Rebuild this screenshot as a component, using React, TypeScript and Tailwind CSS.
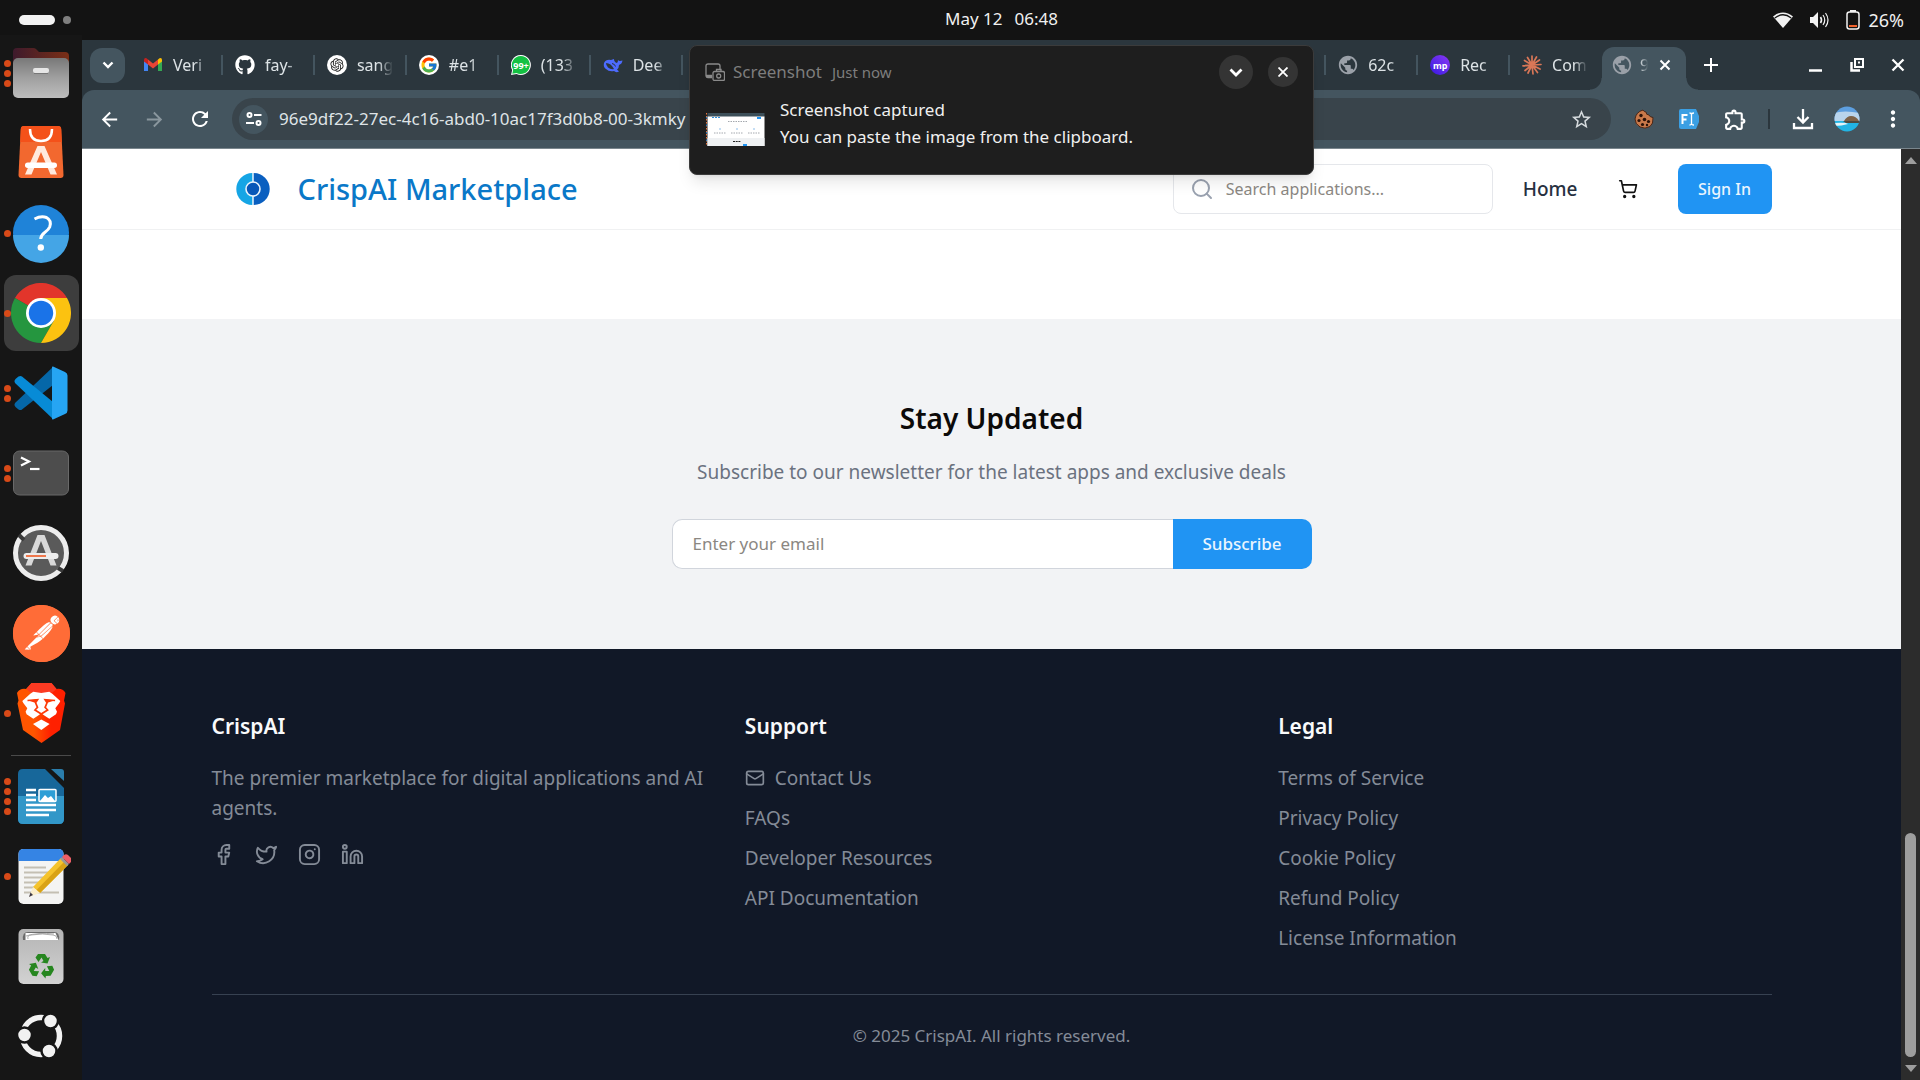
import type { ReactNode } from "react";
import { Facebook, Twitter, Instagram, Linkedin, Mail, Search, ShoppingCart } from "lucide-react";
import { FcGoogle } from "react-icons/fc";
import { FaGithub } from "react-icons/fa";
import { RiOpenaiFill } from "react-icons/ri";
import { SiPostman } from "react-icons/si";
import {
  MdArrowBack,
  MdArrowForward,
  MdMoreVert,
  MdOutlineExtension,
  MdPublic,
  MdRefresh,
  MdStarBorder,
} from "react-icons/md";

/* ---------- dock ---------- */

const FilesIcon = () => (
  <svg viewBox="0 0 60 60" className="size-[60px]">
    <defs>
      <linearGradient id="fl" x1="0" y1="0" x2="0" y2="1">
        <stop offset="0" stopColor="#787878" />
        <stop offset=".5" stopColor="#a0a0a0" />
        <stop offset="1" stopColor="#bdbdbd" />
      </linearGradient>
      <linearGradient id="fb" x1="0" y1="0" x2="1" y2="0">
        <stop offset="0" stopColor="#3e1a2c" />
        <stop offset="1" stopColor="#7a2f16" />
      </linearGradient>
    </defs>
    <path d="M2 22V9q0-4 4-4h16q2 0 3 1l3 3h26q4 0 4 4v12z" fill="url(#fb)" />
    <rect x="2" y="15" width="56" height="40" rx="5" fill="url(#fl)" />
    <rect x="22" y="25" width="16" height="5" rx="2" fill="#e6e6e6" />
    <path d="M23 30.500h14" stroke="#777" />
  </svg>
);

const StoreIcon = () => (
  <svg viewBox="0 0 60 60" className="size-[60px]">
    <path d="M13 3h34q3 0 3.200 3l2.300 46q0 3-3 3h-39q-3 0-3-3L9.800 6q.2-3 3.200-3z" fill="#f2682f" />
    <path d="M13 3h34q3 0 3.200 3l.6 13H9.200l.6-13q.2-3 3.200-3z" fill="#f4511a" />
    <path d="M19 6q0 12 11 12t11-12" fill="none" stroke="#fff" strokeWidth="2.500" />
    <path d="M14 51.500 26.500 23h7L46 51.500h-6.500L30 29l-9.500 22.500z" fill="#ffeade" />
    <rect x="14" y="39.500" width="32" height="5.500" rx="2.700" fill="#fff" />
  </svg>
);

const HelpIcon = () => (
  <svg viewBox="0 0 60 60" className="size-[60px]">
    <circle cx="30" cy="30" r="28" fill="#1f83d8" />
    <path d="M2 32a28 28 0 0 0 56 0z" fill="#44a5e6" />
    <path d="M23.500 16q6.500-3.500 12-1.500 5.500 3 3.200 9.500-1 2.500-5 5.500-4 3-4 6.500" fill="none" stroke="#fff" strokeWidth="3" />
    <circle cx="29.800" cy="44.500" r="3.200" fill="#fff" />
  </svg>
);

const ChromeIcon = () => (
  <svg viewBox="0 0 60 60" className="size-[60px]">
    <path d="M30 30 4 15A30 30 0 0 1 56 15z" fill="#e2352b" />
    <path d="M30 30 4 15a30 30 0 0 0 26 45l13-22.500z" fill="#25963f" />
    <path d="M30 15h26a30 30 0 0 1-26 45l13-22.500z" fill="#fcc210" />
    <circle cx="30" cy="30" r="15" fill="#fff" />
    <circle cx="30" cy="30" r="12.200" fill="#1a73e8" />
  </svg>
);

const CodeIcon = () => (
  <svg viewBox="0 0 60 60" className="size-[60px]">
    <path d="M4 40q-1.500 2 .5 4l3 2.500q2 1 3.500 0L42 22V4z" fill="#0567a8" />
    <path d="M4 20q-1.500-2 .5-4l3-2.500q2-1 3.500 0L42 39v17z" fill="#078bd6" />
    <path d="M42 3.500 54 9q2.500 1 2.500 3.500v35q0 2.500-2.500 3.500l-12 5.500q-1 .3-1-1v-51q0-1.300 1-1z" fill="#26a5f3" />
  </svg>
);

const TerminalIcon = () => (
  <svg viewBox="0 0 60 60" className="size-[60px]">
    <rect x="2.500" y="8" width="55" height="44" rx="6" fill="#4d4d4d" stroke="#696969" />
    <path d="m10 14.500 8 4-8 4" fill="none" stroke="#fff" strokeWidth="2.200" />
    <path d="M19 26h9.500" stroke="#fff" strokeWidth="2.200" />
  </svg>
);

const UpdaterIcon = () => (
  <svg viewBox="0 0 60 60" className="size-[60px]">
    <circle cx="30" cy="30" r="25.500" fill="#5a5a5a" stroke="#ededed" strokeWidth="5" />
    <path d="m8 12 5 5M47 45l5 3" stroke="#3a3a3a" strokeWidth="4" />
    <path d="M14.500 42.500 26.500 12h7l12 30.500h-6L30 18l-9.500 24.500z" fill="#d9d9d9" />
    <rect x="12.500" y="30" width="35" height="6" rx="3" fill="#ececec" />
    <path d="M15 33h20" stroke="#f06a3a" strokeWidth="1.800" />
  </svg>
);

const PostmanIcon = () => (
  <span className="flex size-[60px] items-center justify-center">
    <span className="flex size-[57px] items-center justify-center rounded-full bg-[radial-gradient(circle,#fff_60%,#ff6c37_61%)]">
      <SiPostman className="size-[57px] text-[#ff6c37]" />
    </span>
  </span>
);

const BraveIcon = () => (
  <svg viewBox="0 0 60 60" className="size-[60px]">
    <defs>
      <linearGradient id="br" x1="0" y1="0" x2="1" y2="0">
        <stop offset=".35" stopColor="#ff5500" />
        <stop offset=".7" stopColor="#ff2000" />
      </linearGradient>
    </defs>
    <path d="M20.500 0h20l5 6q6-1 9 4l-1.500 7.500 1 3L49 47 30.500 60 12 47 6.500 20.500l1-3L6 10q3-5 9-4z" fill="url(#br)" />
    <path d="M20.500 0h20l5 6-4 3.500-11 1-11-1-4-3.500z" fill="#fb3a22" />
    <path
      d="M22.300 8.700 30.300 10l8-1.300 3 2 8 7.300-1 2-4 5.300 1.700 3.400-1 2.600-6.700 4.400-4.600-3-3.400-2.400-3.400 2.400-4.600 3-6.700-4.400-1-2.600 1.700-3.400-4-5.300-1-2 8-7.300z"
      fill="#fff"
    />
    <g fill="none" stroke="#fd3a08" strokeWidth="1.700">
      <path d="m16.500 17.500 10-.8-2 3 2 4.600-2.500 2.700 6.300 4" />
      <path d="m44.100 17.500-10-.8 2 3-2 4.600 2.500 2.700-6.300 4" />
    </g>
    <path d="m17 17.500 8-1v3.500zM43.600 17.500l-8-1v3.500z" fill="#fd3a08" />
    <path d="m22 41 8.300-4.500 8.300 4.500-8.300 6z" fill="#fff" />
  </svg>
);

const WriterIcon = () => (
  <svg viewBox="0 0 60 60" className="size-[60px]">
    <path d="M12 3h22l19 19v31q0 5-5 5H12q-5 0-5-5V8q0-5 5-5z" fill="#17679a" />
    <path d="M7 30h46v23q0 5-5 5H12q-5 0-5-5z" fill="#3297c8" />
    <path d="M40 3h10q3 0 3 3v9z" fill="#2a7dab" />
    <path d="M15 24h10M15 29h10M15 34h10M15 39h30M15 44h30M15 49h23" stroke="#fff" strokeWidth="2.300" />
    <rect x="28" y="23.500" width="17" height="12" rx="1" fill="#2d9ed6" stroke="#fff" strokeWidth="1.500" />
    <path d="m29 35 5-6 3 3 3-2 4 5z" fill="#fff" />
  </svg>
);

const EditorIcon = () => (
  <svg viewBox="0 0 60 60" className="size-[60px]">
    <rect x="7.500" y="3" width="45" height="55" rx="5" fill="#f4f4f3" />
    <path d="M12.500 3h35q5 0 5 5v7h-45V8q0-5 5-5z" fill="#3584e4" />
    <path d="M13 21.500h22M13 26.500h26M13 31.500h22M13 36.500h16M13 41.500h12M13 46.500h35" stroke="#c4bfb3" strokeWidth="2.200" />
    <path d="m22 41 28-29 7 7-28 28z" fill="#f5c32c" />
    <path d="m25.500 44 28-28.500 3.500 3.500-28 28z" fill="#d9a215" />
    <path d="m22 41 7 6-11 4z" fill="#fbeecb" />
    <path d="m19.500 46.500 2.500 2.500-4 2z" fill="#3d3846" />
    <path d="m49 13 7 7 2-2-7-7z" fill="#9a9996" />
    <path d="m51 11 2-2q2-1.500 4 0l3 3q1 2 0 4l-2 2z" fill="#ed5f66" />
  </svg>
);

const TrashIcon = () => (
  <svg viewBox="0 0 60 60" className="size-[60px]">
    <defs>
      <linearGradient id="tr" x1="0" y1="0" x2="0" y2="1">
        <stop offset="0" stopColor="#b4b4b4" />
        <stop offset="1" stopColor="#d2d2d2" />
      </linearGradient>
      <g id="arm">
        <path d="M24.500 31.500 27 28h7l2.500 4 2.500-1-2.500 6.500-6.500-1 2.500-1.500-2-3.500-3 4.500z" />
      </g>
    </defs>
    <rect x="7.500" y="3" width="45" height="55" rx="5" fill="url(#tr)" />
    <path d="M12 14q-1-8 5-8h26q6 0 5 8z" fill="#6c6c6c" />
    <path d="M14.500 7h30l3 7h-33z" fill="#fff" />
    <path d="M17 13q-1-4 3-4 12-2 22 0 4 0 4 4M15 10q12-4 28-2" fill="none" stroke="#999" strokeWidth=".8" />
    <g fill="#26861f">
      <use href="#arm" />
      <use href="#arm" transform="rotate(120 30.500 40.500)" />
      <use href="#arm" transform="rotate(240 30.500 40.500)" />
    </g>
  </svg>
);

const UbuntuIcon = () => (
  <svg viewBox="0 0 60 60" className="size-[60px]">
    <circle cx="30" cy="30" r="18.500" fill="none" stroke="#f2f2f2" strokeWidth="5.500" />
    <g fill="#f2f2f2" stroke="#161616" strokeWidth="2.500">
      <circle cx="13.500" cy="29" r="7.500" />
      <circle cx="39.500" cy="15" r="7.500" />
      <circle cx="38" cy="45" r="7.500" />
    </g>
  </svg>
);

type DockApp = { name: string; dots: number; icon: ReactNode; active?: boolean };

const pinned: DockApp[] = [
  { name: "Files", dots: 3, icon: <FilesIcon /> },
  { name: "Software", dots: 0, icon: <StoreIcon /> },
  { name: "Help", dots: 1, icon: <HelpIcon /> },
  { name: "Chrome", dots: 1, icon: <ChromeIcon />, active: true },
  { name: "Code", dots: 2, icon: <CodeIcon /> },
  { name: "Terminal", dots: 2, icon: <TerminalIcon /> },
  { name: "Updater", dots: 0, icon: <UpdaterIcon /> },
  { name: "Postman", dots: 0, icon: <PostmanIcon /> },
  { name: "Brave", dots: 1, icon: <BraveIcon /> },
];
const running: DockApp[] = [
  { name: "Writer", dots: 4, icon: <WriterIcon /> },
  { name: "Text Editor", dots: 1, icon: <EditorIcon /> },
  { name: "Trash", dots: 0, icon: <TrashIcon /> },
  { name: "Show Applications", dots: 0, icon: <UbuntuIcon /> },
];

function DockButton({ app }: { app: DockApp }) {
  return (
    <button
      aria-label={app.name}
      className={`ml-1 flex h-[76px] w-[75px] shrink-0 items-center rounded-xl ${app.active ? "bg-[#3d3d3d]" : ""}`}
    >
      <span className="flex w-[7px] flex-col gap-[3px]">
        {Array.from({ length: app.dots }, (_, i) => (
          <span key={i} className="size-[7px] rounded-full bg-[#d84a18]" />
        ))}
      </span>
      {app.icon}
    </button>
  );
}

function Dock() {
  return (
    <nav aria-label="Dock" className="-mt-[5px] flex w-[82px] shrink-0 flex-col gap-1 bg-[#161616]">
      {pinned.map((a) => (
        <DockButton key={a.name} app={a} />
      ))}
      <div className="-mb-0.5 ml-[11px] h-px w-[60px] shrink-0 bg-[#4a4a4a]" />
      {running.map((a) => (
        <DockButton key={a.name} app={a} />
      ))}
    </nav>
  );
}

/* ---------- browser chrome ---------- */

const GmailIcon = () => (
  <svg viewBox="0 0 20 20" className="size-5">
    <path d="M1 5v11h4V8z" fill="#4285f4" />
    <path d="M15 8v8h4V5z" fill="#34a853" />
    <path d="m5 4.500 5 4 5-4v5l-5 4-5-4z" fill="#ea4335" />
    <path d="M1 5q0-2.500 2.500-1.800L5 4.500v5L1 6.500z" fill="#c5221f" />
    <path d="M19 5q0-2.500-2.500-1.800L15 4.500v5l4-3z" fill="#fbbc04" />
  </svg>
);
const OpenAiTab = () => (
  <span className="flex size-5 items-center justify-center rounded-full bg-white">
    <RiOpenaiFill className="size-4 text-[#222]" />
  </span>
);
const WhatsAppTab = () => (
  <svg viewBox="0 0 20 20" className="size-5">
    <path d="M10 0a10 10 0 1 1-4.500 19L0 20l1.200-5A10 10 0 0 1 10 0z" fill="#fff" />
    <path d="M10 1a9 9 0 1 1-4.500 16.900L1.300 18.700l.9-4A9 9 0 0 1 10 1z" fill="#14c143" />
    <text x="10" y="13.500" textAnchor="middle" fontSize="9" fontWeight="700" fill="#fff">99+</text>
  </svg>
);
const DeepSeekTab = () => (
  <svg viewBox="0 0 20 20" className="size-5">
    <path d="M1 8q2-4 7-3l3-1q0 3 3 4 1-1 1-3 1 1.500 4.500.5-.5 3.500-3.500 4.500 0 3-2 4.500l2 2q-3 1.500-5-.5-5 1-8-2Q0 12 1 8z" fill="#4d6bfe" />
    <path d="M3 8q5 0 8 6-3 1-6-1.500Q3 10.500 3 8z" fill="#2b363d" />
    <path d="M9 8.500q3 .5 3.500 3" stroke="#2b363d" fill="none" />
  </svg>
);
const MpTab = () => (
  <span className="flex size-5 items-center justify-center rounded-full bg-linear-to-bl from-[#8a35f5] to-[#3512e0] text-[9px] leading-none font-bold text-white">
    mp
  </span>
);
const BurstTab = () => (
  <svg viewBox="0 0 20 20" className="size-5" stroke="#d97757" strokeWidth="1.700" strokeLinecap="round">
    <path d="M10 10V1M10 10l4.500-8M10 10l7.500-5M10 10l9-.5M10 10l8 4M10 10l5.500 7.500M10 10l1 9M10 10l-4 8M10 10l-7 5.500M10 10l-9 .8M10 10 2.500 5.500M10 10 5.500 2.500" />
  </svg>
);
const GlobeTab = () => <MdPublic className="-mx-0.5 size-[22px] shrink-0 text-[#9aa0a8]" />;

type Tab = { label: string; icon: ReactNode };
const leftTabs: Tab[] = [
  { label: "Veri", icon: <GmailIcon /> },
  { label: "fay-", icon: <FaGithub className="size-5 text-white" /> },
  { label: "sang", icon: <OpenAiTab /> },
  { label: "#e1", icon: <FcGoogle className="size-5 rounded-full bg-white p-px" /> },
  { label: "(133", icon: <WhatsAppTab /> },
  { label: "Dee", icon: <DeepSeekTab /> },
];
const rightTabs: Tab[] = [
  { label: "62c", icon: <GlobeTab /> },
  { label: "Rec", icon: <MpTab /> },
  { label: "Com", icon: <BurstTab /> },
];

function TabItem({ tab, last }: { tab?: Tab; last?: boolean }) {
  return (
    <div
      className={`flex h-5 min-w-0 flex-1 items-center border-r-2 pl-3 ${last ? "border-transparent" : "border-[#44555f]"}`}
    >
      {tab && (
        <button className="flex items-center gap-2.5">
          <span className="flex w-5 shrink-0 justify-center">{tab.icon}</span>
          <span className="w-9 mask-[linear-gradient(to_right,black_60%,transparent)] text-left text-base leading-6 whitespace-nowrap text-[#dde3e6]">
            {tab.label}
          </span>
        </button>
      )}
    </div>
  );
}

function TabStrip() {
  return (
    <div className="flex h-[50px] shrink-0 items-center bg-[#2b363d] pl-2">
      <button aria-label="Search tabs" className="mr-1.5 flex size-[35px] shrink-0 items-center justify-center rounded-xl bg-[#44555f]">
        <svg viewBox="0 0 12 8" className="h-2 w-3" fill="none" stroke="#fff" strokeWidth="2.400">
          <path d="m1.500 1.500 4.500 4.500 4.500-4.500" />
        </svg>
      </button>
      <div className="flex flex-1 items-center">
        {leftTabs.map((t) => (
          <TabItem key={t.label} tab={t} />
        ))}
        {Array.from({ length: 7 }, (_, i) => (
          <TabItem key={i} />
        ))}
        {rightTabs.map((t, i) => (
          <TabItem key={t.label} tab={t} last={i === 2} />
        ))}
      </div>
      <div className="relative flex h-[43px] w-[84px] shrink-0 items-center gap-2 self-end rounded-t-xl bg-[#44555f] pb-2 pl-[10px]">
        <span className="absolute bottom-0 -left-3 size-3 bg-[radial-gradient(circle_at_0_0,transparent_11px,#44555f_12px)]" />
        <span className="absolute -right-3 bottom-0 size-3 bg-[radial-gradient(circle_at_100%_0,transparent_11px,#44555f_12px)]" />
        <span className="flex w-5 justify-center">
          <GlobeTab />
        </span>
        <span className="mask-[linear-gradient(to_right,black,transparent_90%)] text-base leading-6 text-[#dde3e6]">9</span>
        <button aria-label="Close tab" className="ml-0.5">
          <svg viewBox="0 0 12 12" className="size-3" stroke="#fff" strokeWidth="2">
            <path d="m1.500 1.500 9 9m0-9-9 9" />
          </svg>
        </button>
      </div>
      <button aria-label="New tab" className="ml-[18px]">
        <svg viewBox="0 0 14 14" className="size-3.5" stroke="#fff" strokeWidth="2">
          <path d="M7 0v14M0 7h14" />
        </svg>
      </button>
      <div className="ml-[91px] flex items-center gap-[27px] pr-[15px]">
        <button aria-label="Minimize">
          <svg viewBox="0 0 14 14" className="size-3.5" stroke="#fff" strokeWidth="2.500">
            <path d="M0 12.500h13" />
          </svg>
        </button>
        <button aria-label="Restore">
          <svg viewBox="0 0 14 14" className="size-3.5" fill="none" stroke="#fff" strokeWidth="2">
            <path d="M5 1h8v8H5z" />
            <path d="M1.500 4v8.500H10" strokeWidth="2.500" />
            <path d="M8 4.500h2" />
          </svg>
        </button>
        <button aria-label="Close">
          <svg viewBox="0 0 14 14" className="size-3.5" stroke="#fff" strokeWidth="2.300">
            <path d="m1.500 1.500 11 11m0-11-11 11" />
          </svg>
        </button>
      </div>
    </div>
  );
}

function Toolbar() {
  return (
    <div className="bg-[#2b363d]">
      <div className="flex h-[59px] items-center rounded-t-xl border-b border-[#7a868d] bg-[#44555f] pr-3.5 pl-4 text-white">
        <button aria-label="Back"><MdArrowBack className="size-[23px]" /></button>
        <button aria-label="Forward" className="ml-[22px] text-[#8a979e]"><MdArrowForward className="size-[23px]" /></button>
        <button aria-label="Reload" className="ml-[22px]"><MdRefresh className="size-6" /></button>
        <div className="ml-5 flex h-[42px] flex-1 items-center rounded-full bg-[#39444b] pr-[18px] pl-[7px]">
          <button aria-label="Site information" className="flex size-[29px] shrink-0 items-center justify-center rounded-full bg-[#44555f]">
            <svg viewBox="0 0 16 16" className="size-4" fill="none" stroke="#fff" strokeWidth="2">
              <circle cx="3.500" cy="4" r="2" />
              <path d="M8 4h7.500M0 12h8" />
              <circle cx="12.500" cy="12" r="2" />
            </svg>
          </button>
          <input
            aria-label="Address"
            readOnly
            value="96e9df22-27ec-4c16-abd0-10ac17f3d0b8-00-3kmky"
            className="ml-[11px] min-w-0 flex-1 bg-transparent text-[17px] text-[#dfe3e6] outline-none"
          />
          <button aria-label="Bookmark" className="text-[#d5dadd]"><MdStarBorder className="size-[23px]" /></button>
        </div>
        <div className="ml-[23px] flex items-center">
          <button aria-label="Cookies">
            <svg viewBox="0 0 20 20" className="size-5">
              <path d="M9 1q1 2 3 2 0 3 3 3 .5 2 4 2.500Q19.500 15 16 17.500 11 20.500 6 18 1 15 1 10 2 3 9 1z" fill="#c9794a" stroke="#4a2616" />
              <g fill="#2b1209">
                <circle cx="7" cy="6.500" r="1.700" /><circle cx="5" cy="11.500" r="1.600" /><circle cx="10.500" cy="10.500" r="1.800" />
                <circle cx="8.500" cy="15.500" r="1.600" /><circle cx="14.500" cy="12.500" r="1.600" /><circle cx="13" cy="16" r="1.200" />
              </g>
            </svg>
          </button>
          <button aria-label="Font inspector" className="ml-[25px]">
            <svg viewBox="0 0 20 20" className="size-5">
              <path d="M2 0h15l3 7v6l-3 7H2q-2 0-2-2V2q0-2 2-2z" fill="#3b9fe3" />
              <path d="M3.500 15V6h5M3.500 10.500h4" stroke="#fff" strokeWidth="2" fill="none" />
              <path d="M10.500 4q2 0 2 1.500v9q0 1.500-2 1.500M15 4q-2.500 0-2.500 1.500v9q0 1.500 2.500 1.500" stroke="#fff" strokeWidth="1.300" fill="none" />
            </svg>
          </button>
          <button aria-label="Extensions" className="ml-6"><MdOutlineExtension className="size-[25px]" /></button>
          <span className="ml-5 h-5 w-0.5 bg-[#2b363d]" />
          <button aria-label="Downloads" className="ml-[22px]">
            <svg viewBox="0 0 22 22" className="size-[22px]" fill="none" stroke="#fff" strokeWidth="2.300">
              <path d="M11 1v13M5.500 9l5.500 5.500L16.500 9M2 15v5h18v-5" />
            </svg>
          </button>
          <button aria-label="Profile" className="ml-5">
            <svg viewBox="0 0 26 26" className="size-[26px]">
              <defs>
                <clipPath id="av"><circle cx="13" cy="13" r="12.500" /></clipPath>
              </defs>
              <g clipPath="url(#av)">
                <path d="M0 0h26v15H0z" fill="#5d9fe0" />
                <path d="M0 7q10-3 26 0v8H0z" fill="#b9d4ec" />
                <path d="M10 15q3-5 7-5 5 0 8 5v3H9z" fill="#7d6248" />
                <path d="M0 15h26v11H0z" fill="#22b4e4" />
                <path d="M9 15h17v2H12z" fill="#4d4a40" />
                <path d="M0 17q12-1 14 1Q8 20 0 20z" fill="#e4f3f7" />
              </g>
            </svg>
          </button>
          <button aria-label="Menu" className="ml-5"><MdMoreVert className="size-[26px]" /></button>
        </div>
      </div>
    </div>
  );
}

/* ---------- web page ---------- */

function SiteHeader() {
  return (
    <header className="border-b border-[#f0f1f2] bg-white">
      <div className="mx-auto flex h-20 w-full max-w-[1600px] items-center px-5">
        <a href="#" className="flex items-center">
          <svg viewBox="0 0 34 34" className="mx-6 size-[34px]">
            <path d="M16.300 1a16 16 0 0 0 0 32z" fill="#15a5e5" />
            <path d="M17.700 1a16 16 0 0 1 0 32z" fill="#0a5fc0" />
            <circle cx="17" cy="17" r="7" fill="#0757b8" stroke="#e8f3fb" strokeWidth="1.600" />
          </svg>
          <span className="ml-1 text-[29px] leading-10 font-medium text-[#0a78c8]">CrispAI Marketplace</span>
        </a>
        <div className="ml-auto flex h-[50px] w-80 items-center gap-3 rounded-lg border border-[#e5e7eb] pl-4">
          <Search className="size-6 shrink-0 text-gray-400" />
          <input
            aria-label="Search applications"
            placeholder="Search applications..."
            className="min-w-0 flex-1 bg-transparent text-base outline-none placeholder:text-[#8b8782]"
          />
        </div>
        <a href="#" className="ml-[30px] text-[19px] font-medium text-[#27303f]">Home</a>
        <button aria-label="Cart" className="ml-10 text-[#111]"><ShoppingCart className="size-5" /></button>
        <button className="ml-10 h-[50px] w-[94px] rounded-lg bg-[#2094f3] text-base font-medium text-[#eaf5fe]">Sign In</button>
      </div>
    </header>
  );
}

function Newsletter() {
  return (
    <section className="mt-[89px] flex h-[330px] shrink-0 flex-col items-center bg-[#f2f3f5] pt-20">
      <h2 className="text-[28px] leading-[38px] font-semibold text-[#0c0a09]">Stay Updated</h2>
      <p className="mt-5 text-[19px] leading-[30px] text-[#6b7280]">
        Subscribe to our newsletter for the latest apps and exclusive deals
      </p>
      <form className="mt-8 flex h-[50px] w-full max-w-[640px]" onSubmit={(e) => e.preventDefault()}>
        <input
          type="email"
          aria-label="Email"
          placeholder="Enter your email"
          className="min-w-0 flex-1 rounded-l-[10px] border border-r-0 border-gray-300 bg-white px-5 text-[17px] outline-none placeholder:text-[#8b8782]"
        />
        <button className="w-[139px] rounded-r-[10px] bg-[#2094f3] text-[17px] font-medium text-[#eaf5fe]">Subscribe</button>
      </form>
    </section>
  );
}

function FooterColumn({ title, children }: { title: string; children: ReactNode }) {
  return (
    <div>
      <h3 className="mb-5 text-[21px] leading-[34px] font-semibold text-[#f9fafb]">{title}</h3>
      {children}
    </div>
  );
}

function FooterLinks({ items }: { items: string[] }) {
  return (
    <ul className="flex flex-col gap-2.5">
      {items.map((label) => (
        <li key={label}>
          <a href="#" className="flex items-center gap-2.5">
            {label === "Contact Us" && <Mail className="size-5" />}
            {label}
          </a>
        </li>
      ))}
    </ul>
  );
}

function SiteFooter() {
  return (
    <footer className="flex-1 bg-[#111827] pt-[60px] text-[19px] leading-[30px] text-[#848b97]">
      <div className="mx-auto w-full max-w-[1600px] px-5">
        <div className="grid grid-cols-3 gap-10">
          <FooterColumn title="CrispAI">
            <p>The premier marketplace for digital applications and AI agents.</p>
            <div className="mt-5 flex gap-5">
              <a href="#" aria-label="Facebook"><Facebook className="size-[23px]" /></a>
              <a href="#" aria-label="Twitter"><Twitter className="size-[23px]" /></a>
              <a href="#" aria-label="Instagram"><Instagram className="size-[23px]" /></a>
              <a href="#" aria-label="LinkedIn"><Linkedin className="size-[23px]" /></a>
            </div>
          </FooterColumn>
          <FooterColumn title="Support">
            <FooterLinks items={["Contact Us", "FAQs", "Developer Resources", "API Documentation"]} />
          </FooterColumn>
          <FooterColumn title="Legal">
            <FooterLinks
              items={["Terms of Service", "Privacy Policy", "Cookie Policy", "Refund Policy", "License Information"]}
            />
          </FooterColumn>
        </div>
        <p className="mt-[41px] border-t border-[#374151] pt-[29px] text-center text-[17px] leading-6">
          © 2025 CrispAI. All rights reserved.
        </p>
      </div>
    </footer>
  );
}

/* ---------- desktop ---------- */

function TopBar() {
  return (
    <header className="grid h-10 shrink-0 grid-cols-3 items-center bg-[#131313] px-4 text-[17px] text-[#f0f0f0]">
      <div className="flex items-center gap-2 pl-[3px]">
        <span className="h-2.5 w-9 rounded-full bg-[#f2f2f2]" />
        <span className="size-2 rounded-full bg-[#7f7f7f]" />
      </div>
      <div className="flex justify-center gap-3 pb-0.5 pl-[83px] leading-6">
        <span>May 12</span>
        <span>06:48</span>
      </div>
      <div className="flex items-center justify-end">
        <svg viewBox="0 0 20 16" className="h-4 w-5">
          <path d="M0 4.500Q10-3.500 20 4.500L10 16z" fill="#f2f2f2" />
          <path d="M1.800 6q8.200-6.500 16.400 0" fill="none" stroke="#131313" strokeWidth="1.300" />
        </svg>
        <svg viewBox="0 0 20 18" className="ml-4 h-[18px] w-5" fill="none" stroke="#f2f2f2" strokeWidth="1.600">
          <path d="M1 6h3l5-5v16l-5-5H1z" fill="#f2f2f2" stroke="none" />
          <path d="M11.500 6q2 3 0 6" />
          <path d="M14 4q3.500 5 0 10M16.500 2q5 7 0 14" strokeWidth="1.200" />
        </svg>
        <svg viewBox="0 0 14 20" className="ml-[17px] h-5 w-3.5">
          <rect x="1" y="2" width="12" height="17" rx="2.500" fill="none" stroke="#f2f2f2" strokeWidth="1.500" />
          <path d="M4 1h6" stroke="#f2f2f2" strokeWidth="2" />
          <path d="M3 15h8v2H3z" fill="#f0622d" />
        </svg>
        <span className="ml-2 text-lg leading-6">26%</span>
      </div>
    </header>
  );
}

function Notification() {
  return (
    <aside className="absolute top-[45px] left-1/2 ml-[-271px] h-[130px] w-[625px] rounded-lg border border-[#3b3b3b] bg-[#1e1e1e] px-[15px] pt-[9px] text-[17px] text-[#f0f0f0] shadow-lg">
      <div className="flex h-[34px] items-center text-[#7d7d7d]">
        <svg viewBox="0 0 20 18" className="h-[18px] w-5" fill="none" stroke="#8a8a8a" strokeWidth="1.300">
          <path d="M7 14.500H3q-2 0-2-2V3q0-2 2-2h10q2 0 2 2v3" />
          <path d="M1 13h6" strokeWidth="2.500" />
          <rect x="8" y="8.500" width="11.500" height="9" rx="1.500" />
          <circle cx="13.700" cy="13" r="2" />
          <path d="M11.500 8V6.500h4.500V8" />
        </svg>
        <span className="ml-2">Screenshot</span>
        <span className="ml-2.5 text-[15px]">Just now</span>
        <button aria-label="Expand" className="ml-auto flex size-[34px] items-center justify-center rounded-full bg-[#343434]">
          <svg viewBox="0 0 14 9" className="h-[9px] w-3.5" fill="none" stroke="#fff" strokeWidth="2.800">
            <path d="m1.500 1.500 5.500 5.500 5.500-5.500" />
          </svg>
        </button>
        <button aria-label="Dismiss" className="ml-[15px] flex size-[30px] items-center justify-center rounded-full bg-[#343434]">
          <svg viewBox="0 0 10 10" className="size-2.5" stroke="#fff" strokeWidth="1.800">
            <path d="m.5.5 9 9m0-9-9 9" />
          </svg>
        </button>
      </div>
      <div className="mt-[7px] flex">
        <svg viewBox="0 0 60 34" className="mt-4 h-[34px] w-[60px] shrink-0">
          <path d="M2.500 1h57v4h-57z" fill="#3c4f59" />
          <path d="M2.500 4.500h57V34h-57z" fill="#fff" />
          <path d="M2.500 26h57v8h-57z" fill="#eff1f3" />
          <path d="M1.500 1v33" stroke="#e8743b" strokeDasharray="1.500 1.500" />
          <path d="M1.500 5v29" stroke="#2a7ec5" strokeDasharray="1.500 6" />
          <path d="M7 5.500h9" stroke="#2f8fdc" strokeDasharray="2 1" />
          <path d="M52 5h4v2h-4z" fill="#2094f3" />
          <path d="M23 9.500h19M9 21h12M26 21h12M43 21h12" stroke="#a4a8ae" strokeDasharray="1.500 1" />
          <path d="M14 17h2M31 17h2M48 17h2" stroke="#c5def5" strokeWidth="2" />
          <path d="M28 29.500h8" stroke="#222" strokeDasharray="2 .7" />
          <path d="M38 32h4v2h-4z" fill="#2094f3" />
        </svg>
        <div className="ml-[15px] leading-[27px]">
          <p>Screenshot captured</p>
          <p>You can paste the image from the clipboard.</p>
        </div>
      </div>
    </aside>
  );
}

function Scrollbar() {
  return (
    <div aria-hidden="true" className="flex w-[19px] shrink-0 flex-col items-center bg-[#2c2c2c] py-2">
      <svg viewBox="0 0 12 7" className="h-[7px] w-3" fill="#9e9e9e"><path d="M6 0l6 7H0z" /></svg>
      <div className="flex-[669]" />
      <div className="w-[11px] flex-[224] rounded-full bg-[#9e9e9e]" />
      <svg viewBox="0 0 12 7" className="mt-2 h-[7px] w-3" fill="#9e9e9e"><path d="M6 7l6-7H0z" /></svg>
    </div>
  );
}

export default function App() {
  return (
    <div className="relative flex h-screen w-full flex-col overflow-hidden bg-[#161616] font-['Noto_Sans',sans-serif]">
      <TopBar />
      <div className="flex min-h-0 flex-1">
        <Dock />
        <div className="flex min-w-0 flex-1 flex-col">
          <TabStrip />
          <Toolbar />
          <div className="flex min-h-0 flex-1">
            <main className="flex min-w-0 flex-1 flex-col bg-white">
              <SiteHeader />
              <Newsletter />
              <SiteFooter />
            </main>
            <Scrollbar />
          </div>
        </div>
      </div>
      <Notification />
    </div>
  );
}
